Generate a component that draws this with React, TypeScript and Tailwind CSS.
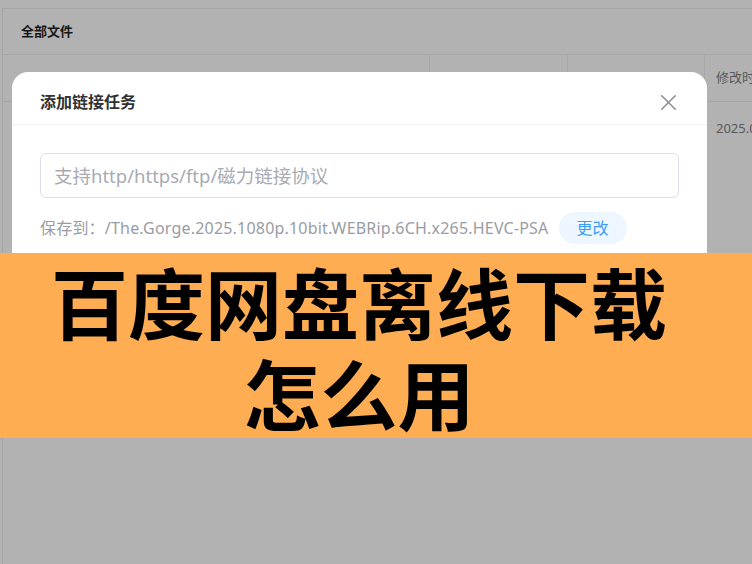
import {X} from "lucide-react";

const font = "font-['Noto_Sans','Noto_Sans_CJK_SC',sans-serif]";

const FilePage = () => {
    return (
        <div className="h-full pl-[2px] pt-[8px]">
            <div className="h-full border-l border-t border-[#eeeeee]">
                <div className="h-[46px] flex items-center pl-[18px] border-b border-[#f0f0f0]">
                    <span className="text-[13px] font-bold text-[#1f1f1f]">全部文件</span>
                </div>
                <div className="grid grid-cols-[426px_138px_137px_1fr] h-[47px] border-b border-[#f0f0f0] text-[13px] text-[#808080]">
                    <div />
                    <div className="border-l border-[#f0f0f0]" />
                    <div className="border-l border-[#f0f0f0]" />
                    <div className="border-l border-[#f0f0f0] flex items-center pl-[11px] whitespace-nowrap">修改时间</div>
                </div>
                <div className="grid grid-cols-[701px_1fr] h-[56px] text-[13px] text-[#808080]">
                    <div />
                    <div className="flex items-center pl-[12px] pb-[3px] whitespace-nowrap">2025.06.12 10:21</div>
                </div>
            </div>
        </div>
    );
}

const LinkModal = () => {
    return (
        <div className="absolute left-[12px] top-[72px] w-[695px] h-[300px] rounded-[16px] bg-white">
            <div className="h-[53px] flex items-center justify-between pt-[8px] pl-[28px] pr-[25px] border-b border-[#f3f3f3]">
                <span className="text-[16px] font-bold text-[#303133]">添加链接任务</span>
                <X size={27} strokeWidth={1.4} className="text-[#8f9196]" />
            </div>
            <div className="px-[28px] pt-[28px]">
                <div className="h-[45px] rounded-[6px] border border-[#dcdfe6] flex items-center pl-[13px]">
                    <span className="text-[18.5px] text-[#a8abb2]">支持http/https/ftp/磁力链接协议</span>
                </div>
                <div className="flex items-center gap-[10px] mt-[14px]">
                    <span className="text-[16px] tracking-[0.2px] text-[#9a9ca3] whitespace-nowrap">保存到：/The.Gorge.2025.1080p.10bit.WEBRip.6CH.x265.HEVC-PSA</span>
                    <button className="h-[32px] w-[68px] rounded-full bg-[#eef6ff] text-[16px] text-[#3d9df5]">更改</button>
                </div>
            </div>
        </div>
    );
}

const App = () => {
    return (
        <div className={`relative w-[752px] h-[564px] overflow-hidden bg-white ${font}`}>
            <FilePage />
            <div className="absolute inset-0 bg-black/30" />
            <LinkModal />
            <div className="absolute left-0 right-0 top-[253px] h-[185px] bg-[#ffad52] flex flex-col items-center justify-center pr-[34px]">
                <div className="text-[77px] leading-[91px] font-bold text-black font-['Noto_Sans_CJK_SC',sans-serif]">百度网盘离线下载</div>
                <div className="text-[77px] leading-[91px] font-bold text-black font-['Noto_Sans_CJK_SC',sans-serif]">怎么用</div>
            </div>
        </div>
    );
}

export default App;
